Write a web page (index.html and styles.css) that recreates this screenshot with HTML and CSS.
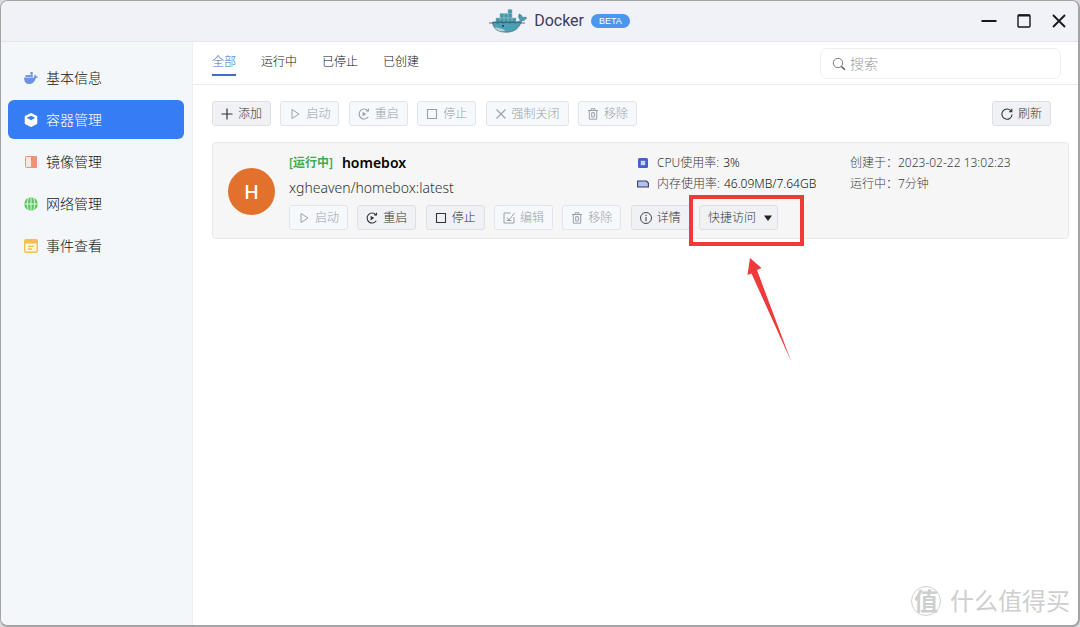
FILE: index.html
```html
<!DOCTYPE html>
<html lang="zh-CN">
<head>
<meta charset="utf-8">
<meta name="viewport" content="width=device-width, initial-scale=1">
<title>Docker</title>
<link rel="stylesheet" href="styles.css">
</head>
<body>
<svg class="sprite" aria-hidden="true">
  <symbol id="i-plus" viewBox="0 0 12 12"><path d="M6 .5v11M.5 6h11" stroke="currentColor" stroke-width="1.2" fill="none"/></symbol>
  <symbol id="i-play" viewBox="0 0 12 12"><path d="M3 1.5v9L10 6z" stroke="currentColor" fill="none" stroke-linejoin="round"/></symbol>
  <symbol id="i-restart" viewBox="0 0 12 12"><path d="M9.800 2.600A5 5 0 1 0 10.300 8.800M8 3h2.500V.8" stroke="currentColor" stroke-width="1.100" fill="none"/><path d="M4.600 3.800v4.600L8.200 6.100z" fill="currentColor"/></symbol>
  <symbol id="i-stop" viewBox="0 0 12 12"><path d="M1.500 1.500h9v9h-9z" stroke="currentColor" stroke-width="1.100" fill="none"/></symbol>
  <symbol id="i-cross" viewBox="0 0 12 12"><path d="M1.500 1.500l9 9M10.500 1.500l-9 9" stroke="currentColor" stroke-width="1.100" fill="none"/></symbol>
  <symbol id="i-trash" viewBox="0 0 12 12"><path d="M1 2.500h10M4 2.500V.8h4v1.700M2.300 2.500v8.700h7.400V2.500M4.700 4.700v4.300M7.300 4.700v4.300M4.700 4.700h2.600M4.700 9h2.600" stroke="currentColor" fill="none"/></symbol>
  <symbol id="i-edit" viewBox="0 0 12 12"><path d="M7.500 1H1v10h10V5M4 5.500l2 2.500 5.500-7M3.500 8.500h5" stroke="currentColor" fill="none"/></symbol>
  <symbol id="i-info" viewBox="0 0 12 12"><circle cx="6" cy="6" r="5.500" stroke="currentColor" stroke-width=".9" fill="none"/><path d="M6 5v4.200M6 2.800V4" stroke="currentColor" fill="none"/></symbol>
  <symbol id="i-refresh" viewBox="0 0 12 12"><path d="M10.300 3.300A5.100 5.100 0 1 0 11.100 6.500M10.800.8v3H8" stroke="currentColor" stroke-width="1.100" fill="none"/></symbol>
</svg>

<div class="window">
  <header class="titlebar">
    <div class="brand">
      <svg class="whale" viewBox="0 0 38 24" aria-hidden="true">
        <g fill="#4595ab" stroke="#8fbac6" stroke-width=".5">
          <path d="M7 9h4v4.500H7zM11 9h4v4.500h-4zM15 9h4v4.500h-4zM19 9h4v4.500h-4zM23 9h4v4.500h-4zM11 4.500h4V9h-4zM15 4.500h4V9h-4zM19 4.500h4V9h-4zM19 .5h4v4h-4z"/>
        </g>
        <path d="M3.500 13h23.500c2.500 0 4-.8 4.300-2-1.900-2-2-4-1.100-6 2 .8 3 2 3.200 3.700 1.300-.6 2.900-.6 4.100 0-.9 2-2.400 2.900-4.700 3-2.500 7.500-7.300 11.500-15.300 11.500C8 23.200 4 19.500 3.500 13z" fill="#4ba0b6" stroke="#2c6678" stroke-width=".6"/>
        <path d="M5.500 18c4 1.600 8 .8 11 4-2.400.6-5 .4-7.200-.5-1.800-.8-3-2-3.800-3.500z" fill="#b9cdd4"/>
        <path d="M0 14h4l2-.8 2.500.8 3-.8 3 .8 3-.8 3 .8 3-.8 3 .8 2.500-.8 2 .8h5" fill="none" stroke="#38545f" stroke-width=".8"/>
        <circle cx="14" cy="17" r="1" fill="#243b48"/>
      </svg>
      <h1 class="brand-name">Docker</h1>
      <span class="beta">BETA</span>
    </div>
    <div class="window-controls">
      <button type="button" aria-label="最小化"><svg viewBox="0 0 16 16"><path d="M.5 8h15" stroke="#16171c" stroke-width="1.800"/></svg></button>
      <button type="button" aria-label="最大化"><svg viewBox="0 0 16 16"><rect x="2" y="2" width="12" height="12" rx="1" fill="none" stroke="#16171c" stroke-width="1.400"/><path d="M2 2.500h12" stroke="#16171c" stroke-width="1.800"/></svg></button>
      <button type="button" aria-label="关闭"><svg viewBox="0 0 16 16"><path d="M2 2l12 12M14 2L2 14" stroke="#16171c" stroke-width="1.800"/></svg></button>
    </div>
  </header>

  <div class="layout">
    <nav class="sidebar" aria-label="Docker">
      <a class="nav-item" href="#info">
        <svg viewBox="0 0 14 14"><path d="M0 6.500h10.300c-.3-1.300 0-2.300.6-3 .8.500 1.200 1.200 1.300 2 .7-.1 1.300 0 1.800.3-.4 1-1.200 1.400-2.200 1.400C10.700 11 8.500 13 5 13 1.800 13 .1 10.500 0 6.500zM1.500 4h2.300v2H1.500zM4 4h2.200v2H4zM6.400 4h2.300v2H6.400zM6.400 1h2.300v2.700H6.400z" fill="#6c93e6"/></svg>
        基本信息
      </a>
      <a class="nav-item is-active" href="#containers" aria-current="page">
        <svg viewBox="0 0 14 14"><path d="M7 .3l6 3v7.400l-6 3-6-3V3.300z" fill="#fff" stroke="#fff" stroke-width=".6" stroke-linejoin="round"/><path d="M7 2.800l4.200 2L7 7.200 2.800 4.800z" fill="#367cf5"/></svg>
        容器管理
      </a>
      <a class="nav-item" href="#images">
        <svg viewBox="0 0 14 14"><rect x="1.500" y="1.500" width="11" height="11" rx="1" fill="#fbe5df" stroke="#ef9278"/><path d="M7 1h5a1 1 0 0 1 1 1v10a1 1 0 0 1-1 1H7z" fill="#ef9278"/></svg>
        镜像管理
      </a>
      <a class="nav-item" href="#network">
        <svg viewBox="0 0 14 14"><circle cx="7" cy="7" r="6.800" fill="#5bc95d"/><path d="M0 7h14M7 0v14M5 0C2.800 4 2.800 10 5 14M9 0c2.200 4 2.200 10 0 14" stroke="#f0f8f4" stroke-width=".9" fill="none"/></svg>
        网络管理
      </a>
      <a class="nav-item" href="#events">
        <svg viewBox="0 0 14 14"><rect x=".7" y=".7" width="12.600" height="12.600" rx="1.500" fill="#fff6dd" stroke="#f3c04d" stroke-width="1.400"/><path d="M.7.700h12.600v3.800H.7z" fill="#f3c04d"/><path d="M4 7.300h6M4 10h4" stroke="#f3c04d" stroke-width="1.300"/></svg>
        事件查看
      </a>
    </nav>

    <main class="content">
      <div class="topbar">
        <div class="tabs" role="tablist">
          <button class="tab is-active" role="tab" aria-selected="true" type="button">全部</button>
          <button class="tab" role="tab" aria-selected="false" type="button">运行中</button>
          <button class="tab" role="tab" aria-selected="false" type="button">已停止</button>
          <button class="tab" role="tab" aria-selected="false" type="button">已创建</button>
        </div>
        <label class="search">
          <svg viewBox="0 0 14 14" aria-hidden="true"><circle cx="6" cy="6" r="4.700" fill="none" stroke="#777"/><path d="M9.400 9.400L13 12.800" stroke="#555" stroke-width="1.400"/></svg>
          <input type="text" placeholder="搜索" aria-label="搜索">
        </label>
      </div>

      <div class="toolbar">
        <div class="toolbar-actions">
          <button class="btn" type="button"><svg><use href="#i-plus"/></svg>添加</button>
          <button class="btn" type="button" disabled><svg><use href="#i-play"/></svg>启动</button>
          <button class="btn" type="button" disabled><svg><use href="#i-restart"/></svg>重启</button>
          <button class="btn" type="button" disabled><svg><use href="#i-stop"/></svg>停止</button>
          <button class="btn" type="button" disabled><svg><use href="#i-cross"/></svg>强制关闭</button>
          <button class="btn" type="button" disabled><svg><use href="#i-trash"/></svg>移除</button>
        </div>
        <button class="btn" type="button"><svg><use href="#i-refresh"/></svg>刷新</button>
      </div>

      <article class="card">
        <div class="avatar">H</div>
        <div class="card-body">
          <div class="card-info">
            <div class="identity">
              <h2 class="name"><span class="status">[运行中]</span>homebox</h2>
              <p class="image">xgheaven/homebox:latest</p>
            </div>
            <div class="metrics">
              <p class="metric"><svg viewBox="0 0 12 12"><rect x="1" y="1" width="10" height="10" rx="1.500" fill="#4761c6"/><rect x="3.800" y="3.800" width="4.400" height="4.400" fill="#c5d6fa"/></svg>CPU使用率: <span class="value">3%</span></p>
              <p class="metric"><svg viewBox="0 0 12 12"><path d="M.6 3h8.900l1.900 2v4H.6z" fill="#b4c1ee" stroke="#343d66" stroke-width="1.100"/></svg>内存使用率: <span class="value">46.09MB/7.64GB</span></p>
            </div>
            <div class="times">
              <p>创建于：2023-02-22 13:02:23</p>
              <p>运行中：7分钟</p>
            </div>
          </div>
          <div class="card-actions">
            <button class="btn" type="button" disabled><svg><use href="#i-play"/></svg>启动</button>
            <button class="btn" type="button"><svg><use href="#i-restart"/></svg>重启</button>
            <button class="btn" type="button"><svg><use href="#i-stop"/></svg>停止</button>
            <button class="btn" type="button" disabled><svg><use href="#i-edit"/></svg>编辑</button>
            <button class="btn" type="button" disabled><svg><use href="#i-trash"/></svg>移除</button>
            <button class="btn" type="button"><svg><use href="#i-info"/></svg>详情</button>
            <div class="quick">
              <button class="btn" type="button">快捷访问<svg class="caret" viewBox="0 0 8 6"><path d="M0 .5h8L4 6z" fill="#222"/></svg></button>
              <svg class="callout" viewBox="0 0 116 168" aria-hidden="true">
                <rect x="3" y="3" width="111" height="47" fill="none" stroke="#ec3b3a" stroke-width="4"/>
                <path d="M62 64l11.500 10-4.500 2 34 91-39.500-87.500-4 1.500z" fill="#ec3b3a"/>
              </svg>
            </div>
          </div>
        </div>
      </article>
    </main>
  </div>

  <div class="watermark"><span class="seal">值</span><span>什么值得买</span></div>
</div>
</body>
</html>
```
FILE: styles.css
```css
* {
  box-sizing: border-box;
}

body {
  margin: 0;
  background: #d9d9db;
  color: #3c3c3c;
  font-family: "Noto Sans", "Noto Sans CJK SC", sans-serif;
  font-size: 12px;
  font-weight: 300;
  line-height: 20px;
}

h1, h2, p {
  margin: 0;
}

button, input {
  font: inherit;
}

.sprite {
  display: none;
}

.window {
  position: relative;
  display: flex;
  flex-direction: column;
  min-height: 100vh;
  overflow: hidden;
  border: 1px solid #a3a3a6;
  border-bottom-width: 2px;
  border-right-width: 2px;
  border-radius: 8px;
  background: #fff;
}

/* Title bar */
.titlebar {
  display: grid;
  grid-template-columns: 1fr auto 1fr;
  align-items: center;
  height: 41px;
  border-bottom: 1px solid #e5e6e9;
  background: #f1f2f7;
}

.brand {
  grid-column: 2;
  display: flex;
  align-items: center;
  gap: 7px;
  padding-left: 40px;
}

.whale {
  width: 38px;
  height: 24px;
}

.brand-name {
  color: #3b405a;
  font-family: Roboto, sans-serif;
  font-size: 16px;
  font-weight: 400;
}

.beta {
  padding: 0 8px;
  border-radius: 7px;
  background: #4b97ee;
  color: #fff;
  font-family: "Liberation Sans", sans-serif;
  font-size: 9px;
  line-height: 14px;
}

.window-controls {
  display: flex;
  justify-content: flex-end;
  gap: 19px;
  padding-right: 11px;
}

.window-controls button {
  display: flex;
  padding: 0;
  border: 0;
  background: none;
}

.window-controls svg {
  width: 16px;
  height: 16px;
}

/* Layout */
.layout {
  display: flex;
  flex: 1;
}

.sidebar {
  display: flex;
  flex-direction: column;
  gap: 3px;
  width: 192px;
  padding: 16px 8px 0 7px;
  border-right: 1px solid #edf0f3;
  background: #f3f7fa;
}

.nav-item {
  display: flex;
  align-items: center;
  gap: 8px;
  height: 39px;
  padding-left: 16px;
  border-radius: 6px;
  color: #111;
  font-size: 14px;
  text-decoration: none;
}

.nav-item svg {
  width: 14px;
  height: 14px;
}

.nav-item.is-active {
  background: #367cf5;
  color: #fff;
}

.content {
  flex: 1;
  min-width: 0;
}

/* Tabs and search */
.topbar {
  display: flex;
  align-items: center;
  justify-content: space-between;
  height: 43px;
  padding: 0 17px 0 19px;
  border-bottom: 1px solid #ebecee;
}

.tabs {
  display: flex;
  gap: 25px;
}

.tab {
  height: 26px;
  padding: 0;
  border: 0;
  border-bottom: 2px solid transparent;
  background: none;
  color: #111;
}

.tab.is-active {
  border-color: #3d6fc4;
  color: #3d6fc4;
}

.search {
  display: flex;
  align-items: center;
  gap: 4px;
  width: 241px;
  height: 31px;
  padding: 2px 11px 0;
  border: 1px solid #eeeff1;
  border-radius: 7px;
}

.search svg {
  flex: none;
  width: 14px;
  height: 14px;
}

.search input {
  width: 100%;
  padding: 0;
  border: 0;
  outline: 0;
  background: none;
  font-size: 14px;
}

.search input::placeholder {
  color: #999ba0;
}

/* Buttons */
.btn {
  display: flex;
  align-items: center;
  justify-content: center;
  gap: 5px;
  height: 25px;
  padding: 1px 8px 0;
  border: 1px solid #dddfe4;
  border-radius: 3px;
  background: #f0f1f5;
  color: #333;
  white-space: nowrap;
}

.btn svg {
  width: 12px;
  height: 12px;
}

.btn:disabled {
  border-color: #dfe5ea;
  background: #f6f9fc;
  color: #98a0a8;
}

.toolbar {
  display: flex;
  justify-content: space-between;
  padding: 16px 27px 16px 19px;
}

.toolbar-actions,
.card-actions {
  display: flex;
  justify-content: space-between;
}

.toolbar-actions {
  width: 425px;
}

/* Container card */
.card {
  display: flex;
  align-items: center;
  gap: 14px;
  margin: 0 9px 0 19px;
  padding: 10px 15px 8px;
  border: 1px solid #e6e7e8;
  border-radius: 4px;
  background: #f6f6f6;
}

.avatar {
  flex: none;
  width: 47px;
  border-radius: 50%;
  background: #e1712c;
  color: #fff;
  font-size: 20px;
  font-weight: 500;
  line-height: 47px;
  text-align: center;
}

.card-body {
  flex: 1;
}

.card-info {
  display: grid;
  grid-template-columns: 1fr 213px 203px;
  margin-bottom: 7px;
}

.name {
  display: flex;
  gap: 9px;
  color: #000;
  font-size: 14px;
  font-weight: 600;
}

.status {
  color: #45aa50;
  font-size: 12px;
}

.image {
  padding-top: 5px;
  color: #333;
  font-size: 14px;
}

.metrics,
.times {
  display: flex;
  flex-direction: column;
  gap: 1px;
}

.metric {
  display: flex;
  align-items: center;
  gap: 4px;
}

.metric svg {
  width: 12px;
  height: 12px;
  margin-right: 4px;
}

.value {
  color: #111;
}

.card-actions {
  width: 489px;
}

.quick {
  position: relative;
}

.quick .btn {
  gap: 8px;
  padding: 1px 5px 0 8px;
}

.quick .caret {
  width: 8px;
  height: 6px;
}

/* Callout drawn over the quick access button */
.callout {
  position: absolute;
  top: -11px;
  left: -11px;
  width: 116px;
  height: 168px;
  pointer-events: none;
}

.watermark {
  position: absolute;
  right: 8px;
  bottom: 8px;
  display: flex;
  align-items: center;
  gap: 9px;
  color: #cecece;
  font-size: 24px;
  font-weight: 400;
  line-height: 32px;
}

.seal {
  width: 30px;
  border: 1px solid #d0d0d0;
  border-radius: 50%;
  font-weight: 700;
  line-height: 28px;
  text-align: center;
}
```
